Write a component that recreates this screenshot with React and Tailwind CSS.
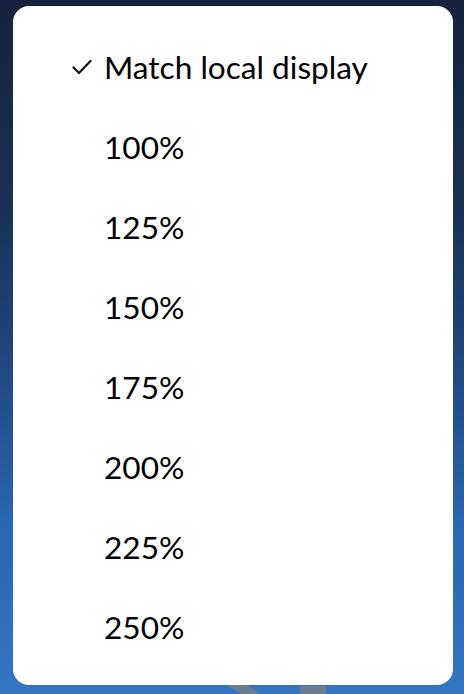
const options = [
  { label: 'Match local display', checked: true },
  { label: '100%' },
  { label: '125%' },
  { label: '150%' },
  { label: '175%' },
  { label: '200%' },
  { label: '225%' },
  { label: '250%' },
];

function Check() {
  return (
    <svg width="20" height="16" viewBox="0 0 20 16" fill="none">
      <path d="M1.5 8.5L7 14L18.5 2" stroke="#111" strokeWidth="2.2" strokeLinecap="round" strokeLinejoin="round" />
    </svg>
  );
}

export default function App() {
  return (
    <div
      className="relative w-[464px] h-[694px] overflow-hidden bg-[linear-gradient(180deg,#15233d_0%,#1a3155_30%,#214b85_55%,#2b66b0_75%,#3476c4_100%)] pt-[6px] pl-[13px]"
      style={{ fontFamily: 'Lato, "Liberation Sans", sans-serif' }}
    >
      <div className="absolute left-[228px] top-[684px] w-[30px] h-[10px] bg-[#6b7d93] rotate-[30deg]" />
      <div className="absolute left-[300px] top-[686px] w-[26px] h-[8px] bg-[#6b7d93]" />
      <div className="relative w-[440px] h-[679px] bg-white rounded-[16px] pt-[21px] pb-[18px]">
        {options.map(option => (
          <div key={option.label} className="h-[80px] flex items-center text-[31.6px] text-black leading-[80px]">
            <div className="w-[91px] pl-[59px] flex items-center">
              {option.checked && <Check />}
            </div>
            <span>{option.label}</span>
          </div>
        ))}
      </div>
    </div>
  );
}
